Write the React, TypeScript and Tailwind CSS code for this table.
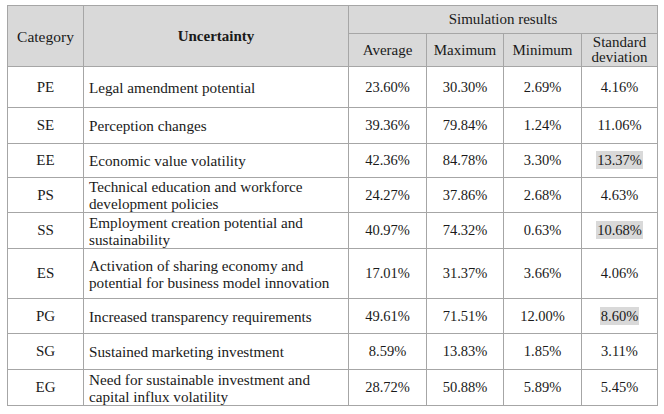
const rows = [
  { cat: "PE", text: ["Legal amendment potential"], v: ["23.60%", "30.30%", "2.69%", "4.16%"], hi: false, h: "h-[41px]" },
  { cat: "SE", text: ["Perception changes"], v: ["39.36%", "79.84%", "1.24%", "11.06%"], hi: false, h: "h-[36px]" },
  { cat: "EE", text: ["Economic value volatility"], v: ["42.36%", "84.78%", "3.30%", "13.37%"], hi: true, h: "h-[34px]" },
  { cat: "PS", text: ["Technical education and workforce", "development policies"], v: ["24.27%", "37.86%", "2.68%", "4.63%"], hi: false, h: "h-[35px]" },
  { cat: "SS", text: ["Employment creation potential and", "sustainability"], v: ["40.97%", "74.32%", "0.63%", "10.68%"], hi: true, h: "h-[36px]" },
  { cat: "ES", text: ["Activation of sharing economy and", "potential for business model innovation"], v: ["17.01%", "31.37%", "3.66%", "4.06%"], hi: false, h: "h-[50px]" },
  { cat: "PG", text: ["Increased transparency requirements"], v: ["49.61%", "71.51%", "12.00%", "8.60%"], hi: true, h: "h-[35px]" },
  { cat: "SG", text: ["Sustained marketing investment"], v: ["8.59%", "13.83%", "1.85%", "3.11%"], hi: false, h: "h-[36px]" },
  { cat: "EG", text: ["Need for sustainable investment and", "capital influx volatility"], v: ["28.72%", "50.88%", "5.89%", "5.45%"], hi: false, h: "h-[36px]" },
];

const cell = "border border-[#a6a6a6] p-0";

export default function App() {
  return (
    <div className="w-[664px] h-[414px] bg-white pl-[7px] pt-[5px]">
      <table className="border-collapse table-fixed w-[650px] [font-family:'Liberation_Serif',serif] text-[14.5px] leading-[17px] text-[#1a1a1a]">
        <colgroup>
          <col className="w-[76px]" />
          <col className="w-[265px]" />
          <col className="w-[78px]" />
          <col className="w-[77px]" />
          <col className="w-[78px]" />
          <col className="w-[76px]" />
        </colgroup>
        <thead className="bg-[#d9d9d9]">
          <tr className="h-[28px]">
            <th rowSpan={2} className={`${cell} font-normal text-center text-[15.5px]`}>Category</th>
            <th rowSpan={2} className={`${cell} font-bold text-center text-[15px]`}>Uncertainty</th>
            <th colSpan={4} className={`${cell} font-normal text-center text-[15px]`}>Simulation results</th>
          </tr>
          <tr className="h-[33px]">
            <th className={`${cell} font-normal text-center text-[15px]`}>Average</th>
            <th className={`${cell} font-normal text-center text-[15px]`}>Maximum</th>
            <th className={`${cell} font-normal text-center text-[15px]`}>Minimum</th>
            <th className={`${cell} font-normal text-center text-[15px] leading-[15px]`}>
              Standard
              <br />
              deviation
            </th>
          </tr>
        </thead>
        <tbody>
          {rows.map((r) => (
            <tr key={r.cat} className={r.h}>
              <td className={`${cell} text-center text-[15px]`}>{r.cat}</td>
              <td className={`${cell} pl-[5px] text-[15.2px]`}>
                {r.text.map((t, i) => (
                  <div key={i}>{t}</div>
                ))}
              </td>
              {r.v.map((x, i) => (
                <td key={i} className={`${cell} text-center`}>
                  {i === 3 && r.hi ? <span className="bg-[#d9d9d9] px-[1px] py-[1px]">{x}</span> : x}
                </td>
              ))}
            </tr>
          ))}
        </tbody>
      </table>
    </div>
  );
}
